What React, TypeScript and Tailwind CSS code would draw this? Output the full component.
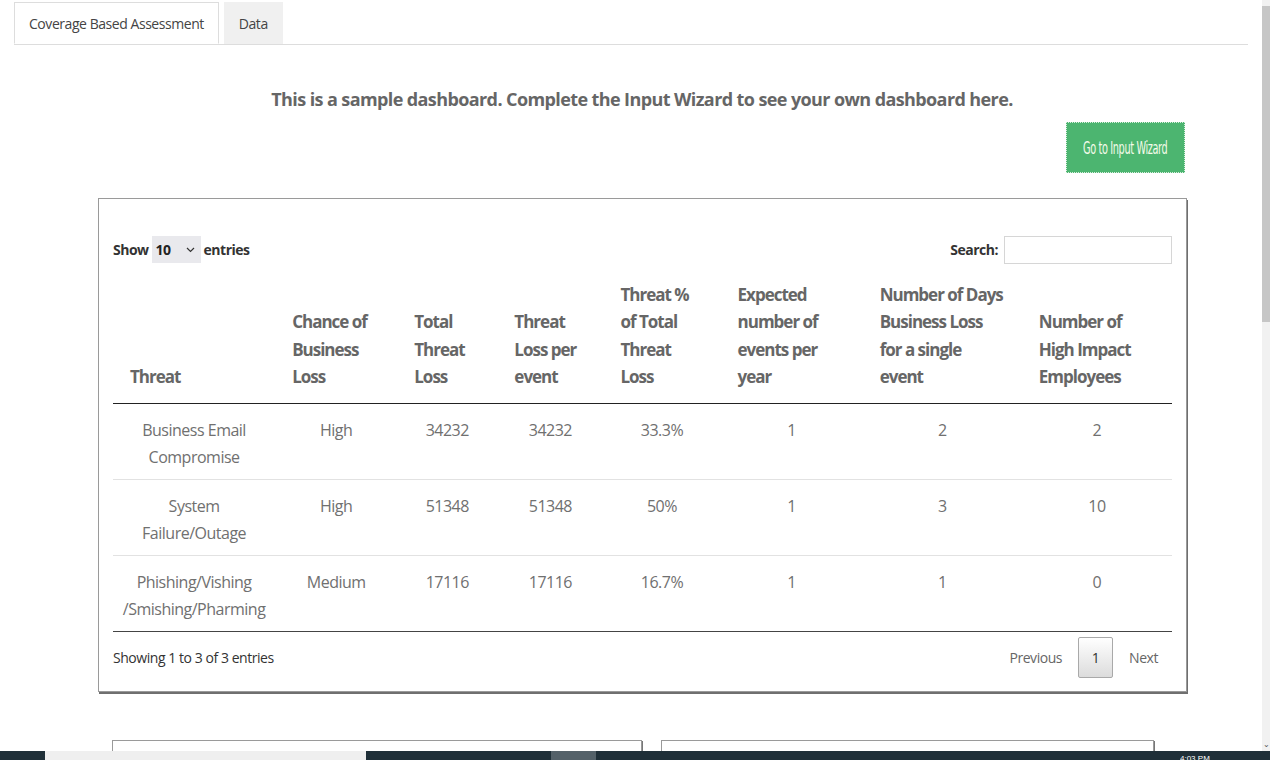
import React from 'react';

const headers: string[][] = [
  ['Threat'],
  ['Chance of', 'Business', 'Loss'],
  ['Total', 'Threat', 'Loss'],
  ['Threat', 'Loss per', 'event'],
  ['Threat %', 'of Total', 'Threat', 'Loss'],
  ['Expected', 'number of', 'events per', 'year'],
  ['Number of Days', 'Business Loss', 'for a single', 'event'],
  ['Number of', 'High Impact', 'Employees'],
];

const rows: string[][][] = [
  [['Business Email', 'Compromise'], ['High'], ['34232'], ['34232'], ['33.3%'], ['1'], ['2'], ['2']],
  [['System', 'Failure/Outage'], ['High'], ['51348'], ['51348'], ['50%'], ['1'], ['3'], ['10']],
  [['Phishing/Vishing', '/Smishing/Pharming'], ['Medium'], ['17116'], ['17116'], ['16.7%'], ['1'], ['1'], ['0']],
];

function Lines({ lines }: { lines: string[] }) {
  return (
    <>
      {lines.map((l, i) => (
        <div key={i}>{l}</div>
      ))}
    </>
  );
}

export default function App() {
  return (
    <div className="w-[1270px] h-[760px] overflow-hidden bg-white flex flex-col font-['Open_Sans',sans-serif] text-[#666]">
      <div className="flex flex-1 min-h-0">
        <main className="flex-1 min-w-0 overflow-hidden">
          {/* tabs */}
          <div className="ml-[14px] mr-[14px] pt-[2px] flex border-b border-[#dddddd]">
            <div className="h-[42px] -mb-px px-[14px] flex items-center bg-white border border-[#dddddd] border-b-white text-[14px] tracking-[-0.45px] text-[#444]">
              Coverage Based Assessment
            </div>
            <div className="h-[42px] ml-[5px] px-[15px] flex items-center bg-[#f0f0f0] text-[14px] tracking-[-0.45px] text-[#444]">
              Data
            </div>
          </div>

          <h2 className="mt-[42px] h-[24px] leading-[24px] text-center pl-[22px] font-bold text-[18px] tracking-[-0.6px] text-[#666]">
            This is a sample dashboard. Complete the Input Wizard to see your own dashboard here.
          </h2>

          <div className="mt-[11px] flex justify-end pr-[77px]">
            <button className="w-[119px] h-[51px] bg-[#4cb570] border border-dotted border-[#d8eedd] flex items-center justify-center">
              <span className="scale-x-[0.6] whitespace-nowrap text-[18px] text-[#f4fbe9] font-['DejaVu_Sans_Condensed','Liberation_Sans',sans-serif] tracking-[-0.6px]">
                Go to Input Wizard
              </span>
            </button>
          </div>

          {/* data table card */}
          <div className="mt-[25px] ml-[98px] w-[1089px] border border-[#9a9a9a] shadow-[1px_2px_0_#6f6f6f] px-[14px] pt-[37px] pb-[13px]">
            <div className="flex items-center justify-between h-[27px] text-[14px] tracking-[-0.5px] font-bold text-[#333]">
              <div className="flex items-center gap-[3px]">
                <span>Show</span>
                <div className="w-[49px] h-[27px] bg-[#e9e9ed] flex items-center justify-between pl-[4px] pr-[6px] text-[#222]">
                  <span>10</span>
                  <svg width="9" height="6" viewBox="0 0 9 6" fill="none">
                    <path d="M1 1l3.5 3.5L8 1" stroke="#333" strokeWidth="1.2" />
                  </svg>
                </div>
                <span>entries</span>
              </div>
              <div className="flex items-center gap-[6px]">
                <span>Search:</span>
                <div className="w-[168px] h-[28px] border border-[#d6d6d6] bg-white" />
              </div>
            </div>

            <table className="mt-[17px] w-full table-fixed border-collapse">
              <colgroup>
                <col className="w-[162px]" />
                <col className="w-[122px]" />
                <col className="w-[100px]" />
                <col className="w-[106px]" />
                <col className="w-[117px]" />
                <col className="w-[142px]" />
                <col className="w-[159px]" />
                <col className="w-[150px]" />
              </colgroup>
              <thead>
                <tr className="border-b border-[#222]">
                  {headers.map((h, i) => (
                    <th
                      key={i}
                      className="h-[123px] align-bottom text-left pl-[17px] pr-[4px] pb-[12px] font-bold text-[17px] leading-[27.5px] tracking-[-1px] text-[#666] whitespace-nowrap"
                    >
                      <Lines lines={h} />
                    </th>
                  ))}
                </tr>
              </thead>
              <tbody>
                {rows.map((r, ri) => (
                  <tr key={ri} className={ri === rows.length - 1 ? 'border-b border-[#444]' : 'border-b border-[#e2e2e2]'}>
                    {r.map((c, ci) => (
                      <td
                        key={ci}
                        className="h-[76px] align-top text-center pt-[13px] text-[16px] leading-[27px] tracking-[-0.5px] text-[#707070] whitespace-nowrap"
                      >
                        <Lines lines={c} />
                      </td>
                    ))}
                  </tr>
                ))}
              </tbody>
            </table>

            <div className="mt-[5px] h-[41px] flex items-center justify-between text-[14px] tracking-[-0.45px]">
              <span className="text-[#333]">Showing 1 to 3 of 3 entries</span>
              <div className="flex items-center text-[#666]">
                <span className="mr-[16px]">Previous</span>
                <div className="w-[35px] h-[41px] border border-[#a9a9a9] rounded-[2px] bg-gradient-to-b from-white to-[#dcdcdc] flex items-center justify-center text-[#333]">
                  1
                </div>
                <span className="ml-[16px] mr-[14px]">Next</span>
              </div>
            </div>
          </div>

          {/* lower panels (cut off) */}
          <div className="mt-[48px] ml-[112px] flex gap-[19px]">
            <div className="w-[530px] h-[40px] border border-[#9a9a9a] shadow-[1px_1px_0_#777]" />
            <div className="w-[493px] h-[40px] border border-[#9a9a9a] shadow-[1px_1px_0_#777]" />
          </div>
        </main>

        {/* scrollbar */}
        <div className="w-[8px] bg-[#f1f1f1] flex flex-col">
          <div className="mt-[6px] h-[316px] bg-[#c6c6c6]" />
          <div className="flex-1" />
          <div className="h-[14px] flex items-center justify-center text-[8px] leading-none text-[#555]">⌄</div>
        </div>
      </div>

      {/* taskbar */}
      <div className="h-[9px] flex bg-[#1f2f38] overflow-hidden">
        <div className="w-[45px]" />
        <div className="w-[321px] bg-[#efefef]" />
        <div className="w-[185px]" />
        <div className="w-[45px] bg-[#546169]" />
        <div className="flex-1" />
        <div className="w-[90px] h-[9px] overflow-hidden text-[8px] leading-[9px] text-white font-['Liberation_Sans',sans-serif] pt-[3px]">4:03 PM</div>
      </div>
    </div>
  );
}
